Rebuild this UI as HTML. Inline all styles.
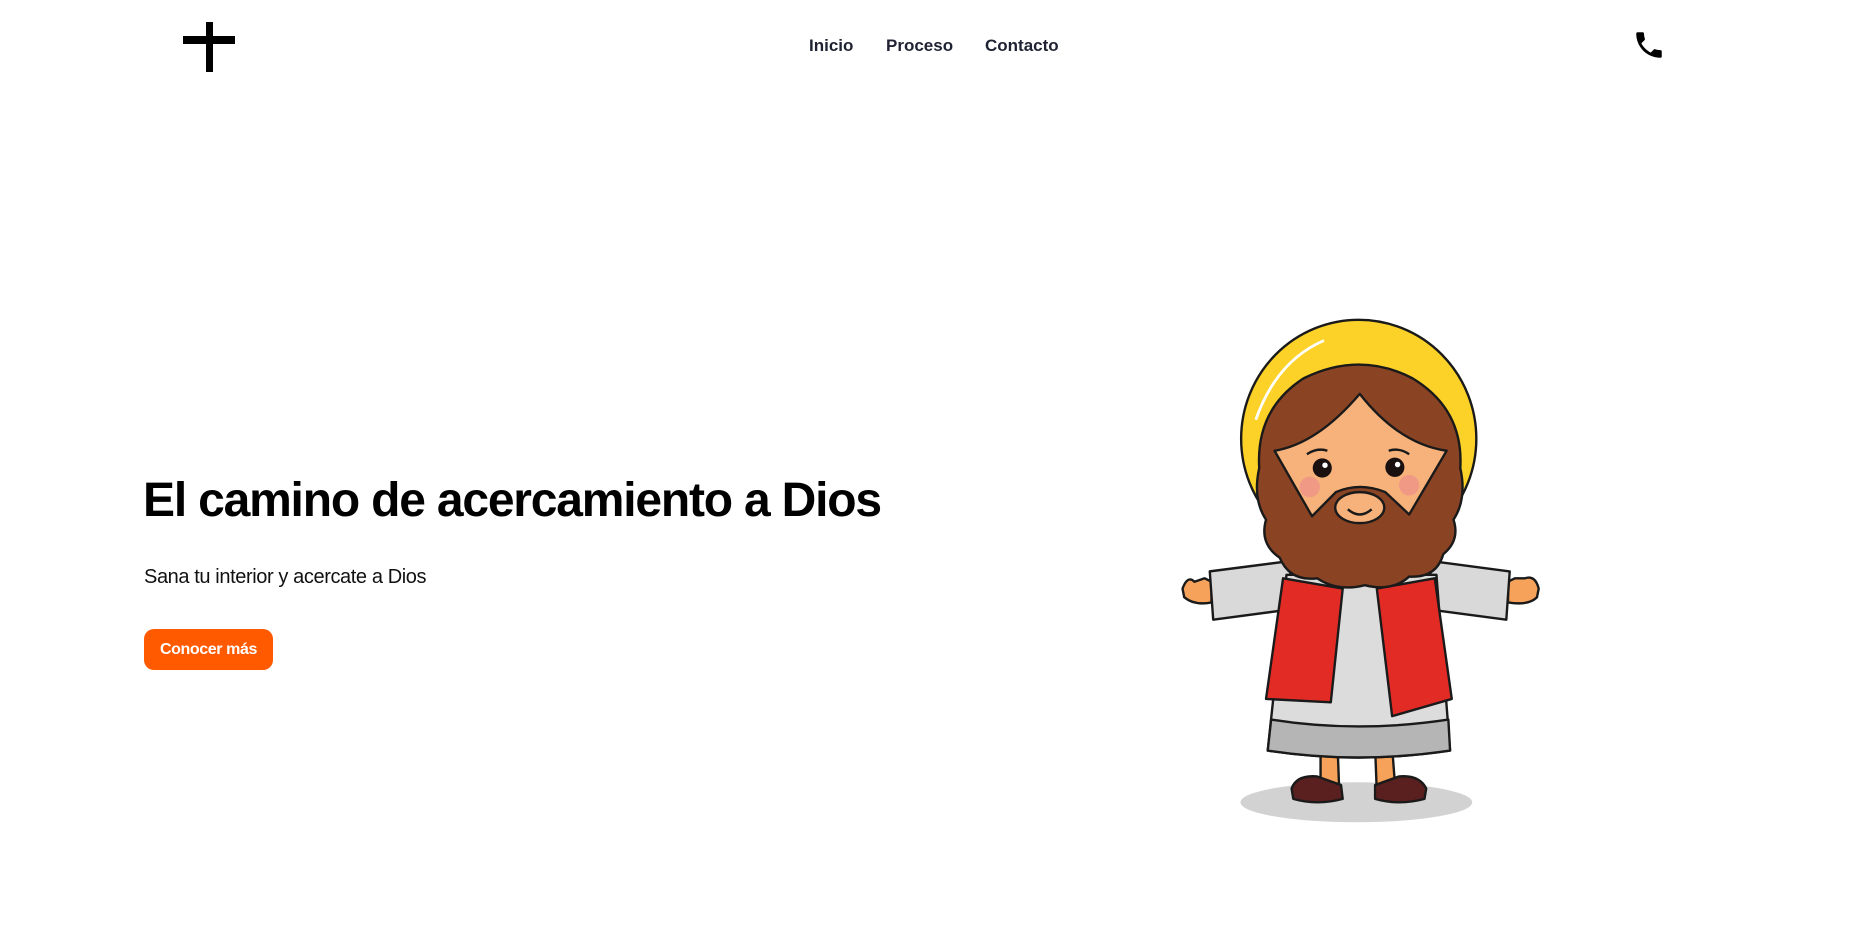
<!DOCTYPE html>
<html><head><meta charset="utf-8"><style>
html,body{margin:0;padding:0;background:#fff;width:1850px;height:925px;overflow:hidden;font-family:"Liberation Sans",sans-serif;}
.nav{position:absolute;top:36px;font-size:17px;font-weight:bold;color:#1f2233;}
h1{position:absolute;left:143px;top:473px;margin:0;font-size:48px;font-weight:bold;letter-spacing:-1.2px;color:#000;white-space:nowrap;}
.sub{position:absolute;left:144px;top:566px;font-size:20px;color:#111;letter-spacing:-0.4px;}
.btn{position:absolute;left:144px;top:629px;width:129px;height:41px;background:#ff5a00;border-radius:10px;color:#fff;font-weight:bold;font-size:16px;line-height:41px;text-align:center;letter-spacing:-0.4px;}
</style></head><body>
<svg style="position:absolute;left:183px;top:22px" width="52" height="50" viewBox="0 0 52 50"><rect x="23" y="0" width="7" height="50" fill="#000"/><rect x="0" y="14" width="52" height="8" fill="#000"/></svg>
<div class="nav" style="left:809px">Inicio</div>
<div class="nav" style="left:886px">Proceso</div>
<div class="nav" style="left:985px">Contacto</div>
<svg style="position:absolute;left:1632px;top:28px" width="34" height="34" viewBox="0 0 24 24"><path d="M6.6 10.8c1.4 2.8 3.8 5.1 6.6 6.6l2.2-2.2c.3-.3.7-.4 1-.2 1.1.4 2.3.6 3.6.6.6 0 1 .4 1 1V20c0 .6-.4 1-1 1C10.6 21 3 13.4 3 4c0-.6.4-1 1-1h3.5c.6 0 1 .4 1 1 0 1.3.2 2.5.6 3.6.1.3 0 .7-.2 1z" fill="#000"/></svg>
<h1>El camino de acercamiento a Dios</h1>
<div class="sub">Sana tu interior y acercate a Dios</div>
<div class="btn">Conocer más</div>
<svg style="position:absolute;left:1174px;top:306px" width="409" height="548" viewBox="0 0 1200 1590" preserveAspectRatio="none">
<g stroke="#1a1a1a" stroke-width="7" stroke-linejoin="round">
<ellipse cx="535" cy="1440" rx="340" ry="58" fill="#d2d2d2" stroke="none"/>
<circle cx="542" cy="385" r="345" fill="#fcd228"/>
<path d="M240 330 Q300 160 440 100" stroke="#fff" stroke-width="8" fill="none"/>
<path d="M25 820 Q40 780 60 800 L90 790 L110 800 L110 860 Q60 870 30 845 Z" fill="#f6a25a"/>
<path d="M1070 820 Q1060 780 1030 790 L1000 790 L980 800 L980 860 Q1040 870 1065 845 Z" fill="#f6a25a"/>
<path d="M105 770 L340 740 L345 880 L115 910 Z" fill="#d9d9d9"/>
<path d="M755 740 L985 770 L975 910 L745 880 Z" fill="#d9d9d9"/>
<path d="M430 1280 L480 1280 L485 1410 L430 1410 Z" fill="#f6a25a"/>
<path d="M590 1280 L640 1280 L650 1410 L595 1410 Z" fill="#f6a25a"/>
<path d="M345 1400 Q360 1360 420 1365 L490 1390 L495 1430 Q420 1450 350 1430 Z" fill="#5a2020"/>
<path d="M590 1390 L660 1365 Q720 1360 740 1400 L735 1430 Q660 1450 590 1430 Z" fill="#5a2020"/>
<path d="M330 780 L770 780 L810 1290 Q540 1330 275 1290 Z" fill="#dcdcdc"/>
<path d="M285 1200 Q540 1240 805 1200 L810 1290 Q540 1330 275 1290 Z" fill="#b5b5b5"/>
<path d="M320 790 L495 820 L460 1150 L270 1140 Z" fill="#e32b26"/>
<path d="M595 820 L765 790 L815 1140 L640 1190 Z" fill="#e32b26"/>
<path d="M270 620 Q230 560 250 470 Q240 300 380 210 Q545 130 700 210 Q850 300 840 470 Q860 560 820 620 Q840 680 790 720 Q770 790 690 785 Q640 830 560 810 Q480 830 420 790 Q340 800 310 730 Q250 690 270 620 Z" fill="#8a4424"/>
<path d="M295 420 Q420 400 545 255 Q660 400 800 420 L690 605 L620 540 Q545 510 475 540 L405 610 Z" fill="#f7b27b"/>
<ellipse cx="545" cy="585" rx="72" ry="45" fill="#f7b27b"/>
<path d="M510 590 Q545 620 580 590" fill="none"/>
</g>
<circle cx="398" cy="525" r="30" fill="#f09a86"/>
<circle cx="690" cy="520" r="30" fill="#f09a86"/>
<circle cx="435" cy="470" r="28" fill="#1a1010"/>
<circle cx="648" cy="468" r="28" fill="#1a1010"/>
<circle cx="443" cy="462" r="8" fill="#fff"/>
<circle cx="656" cy="460" r="8" fill="#fff"/>
<path d="M390 430 Q420 410 450 420 M630 420 Q660 410 690 430" stroke="#1a1a1a" stroke-width="7" fill="none"/>
</svg>
</body></html>
